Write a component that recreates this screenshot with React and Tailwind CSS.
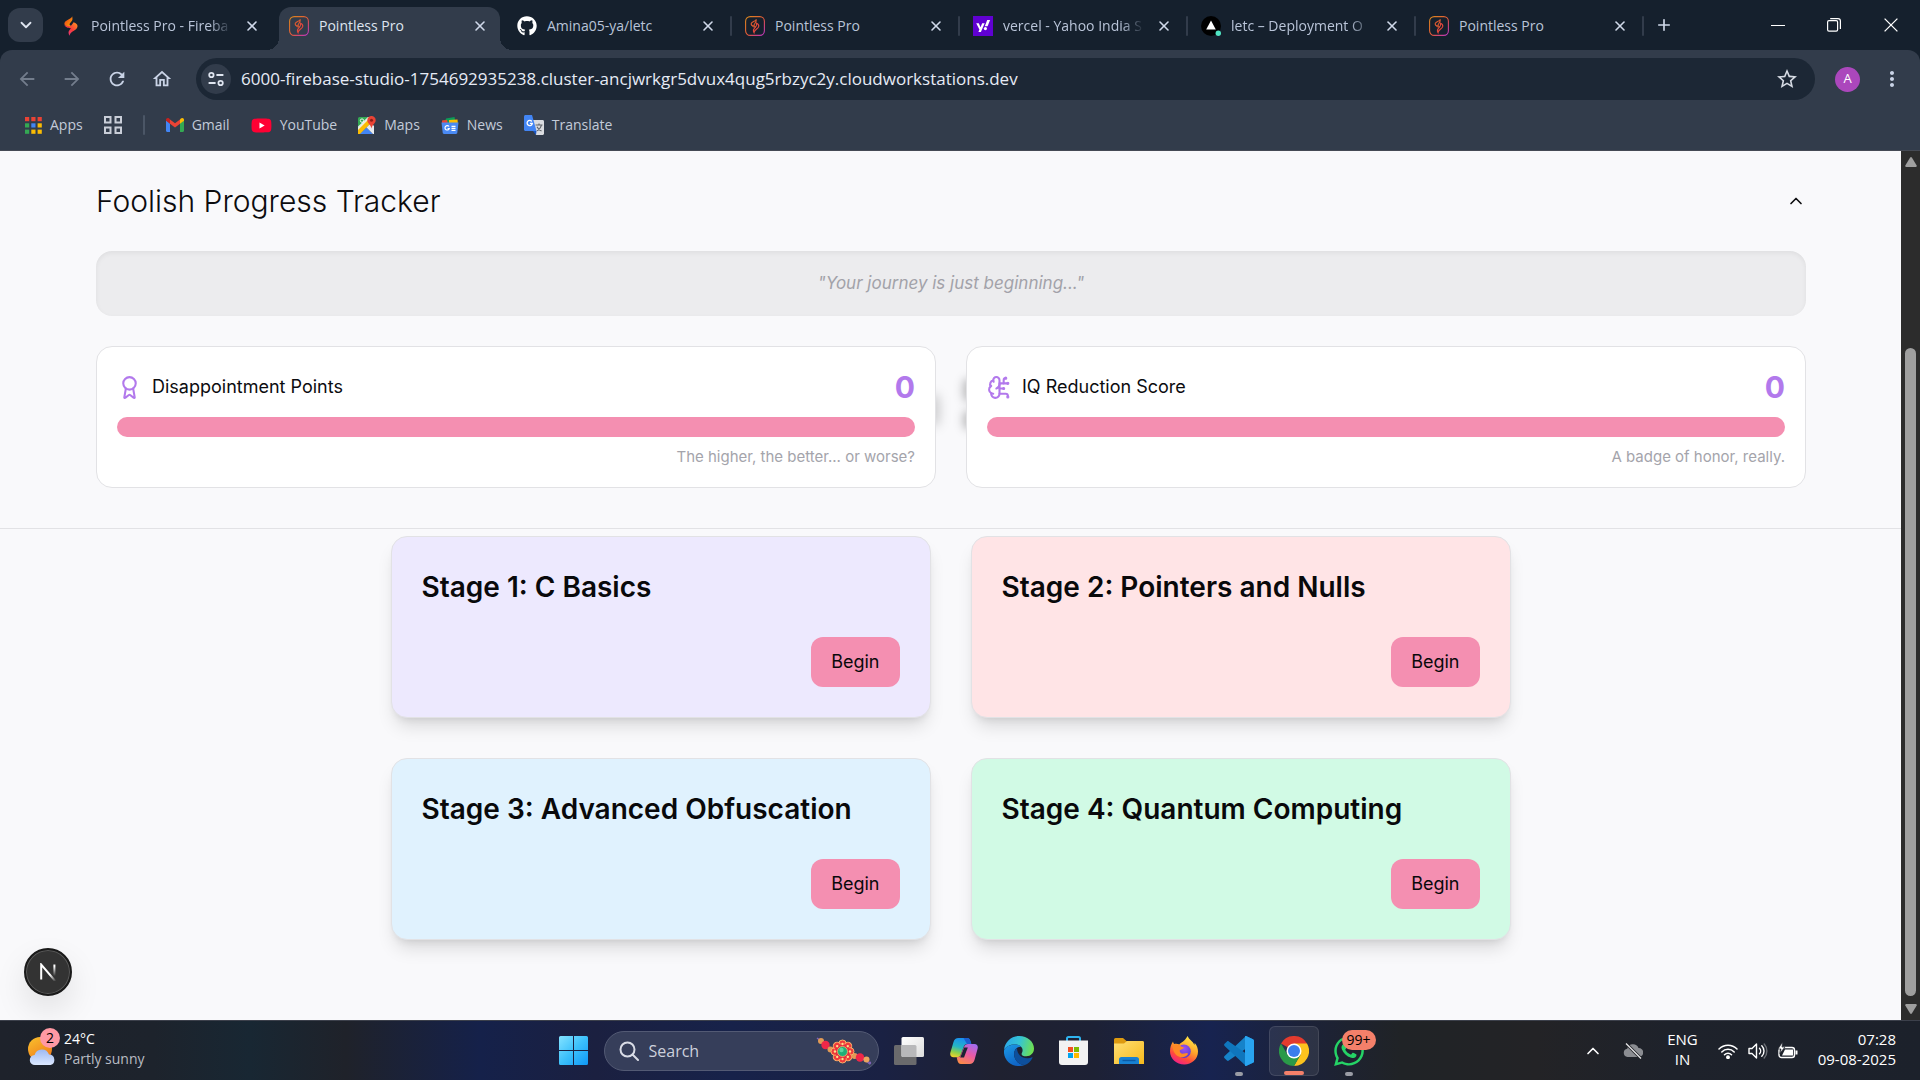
import React from "react";
import { Award, BrainCircuit, ChevronUp, ChevronDown, X, Plus } from "lucide-react";
import { FaGithub, FaWhatsapp, FaYoutube } from "react-icons/fa";
import { MdArrowBack, MdArrowForward, MdRefresh, MdOutlineHome, MdStarOutline, MdMoreVert } from "react-icons/md";

/* ---------- favicons ---------- */

function FirebaseStudioIcon() {
  return (
    <svg viewBox="0 0 20 20" className="size-5 shrink-0">
      <defs>
        <linearGradient id="fs-a" x1="0" y1="0" x2="1" y2="1">
          <stop offset="0" stopColor="#e8321f" />
          <stop offset="1" stopColor="#ffb300" />
        </linearGradient>
        <linearGradient id="fs-b" x1="1" y1="0" x2="0" y2="1">
          <stop offset="0" stopColor="#ff9a1f" />
          <stop offset="0.5" stopColor="#f83b3b" />
          <stop offset="1" stopColor="#e0349a" />
        </linearGradient>
      </defs>
      <path d="M11.2 0.3C11.6 3 11.8 4.2 10.2 5.8L8.8 7.4C8.2 8.3 8.6 9.2 10 9.8L8.6 11.4C6.2 10.5 3.2 9.4 3.4 7.5C3.6 5.5 5 5 7.4 3.6C9.4 2.6 10.8 1.8 11.2 0.3Z" fill="url(#fs-a)" />
      <path d="M3.4 8.6C6 11 10 10.6 11 8.4L12.6 6.2C15 7.2 16.8 8.2 16.5 10.6C16.2 13 14.4 14 12 15.2C9.8 16.4 9 17.6 8.6 19.7C7.4 17.4 7 15.8 8.4 14.2L10 12.2C7.6 12.4 4 11.4 3.4 8.6Z" fill="url(#fs-b)" />
    </svg>
  );
}

function PointlessIcon() {
  return (
    <svg viewBox="0 0 20 20" className="size-5 shrink-0" fill="none">
      <defs>
        <linearGradient id="pp-a" x1="0" y1="0" x2="1" y2="1">
          <stop offset="0" stopColor="#d98a1c" />
          <stop offset="0.55" stopColor="#e2553a" />
          <stop offset="1" stopColor="#b834c8" />
        </linearGradient>
      </defs>
      <rect x="0.6" y="0.6" width="18.8" height="18.8" rx="4.6" stroke="url(#pp-a)" strokeWidth="1.1" />
      <path d="M11.3 3.3C11.4 5.2 11.3 6.2 9.8 7.6C8.9 8.5 8.7 9.3 9.4 10.3C7.3 9.8 5.9 8.9 6.2 7.6C6.6 5.7 10.6 5.5 11.3 3.3Z" stroke="#dc5a30" strokeWidth="1.1" />
      <path d="M11.6 7.2C13.4 8 14.2 8.8 13.7 10.6C13.1 12.8 9.4 13.6 9 16.6C7.9 14.7 8.1 13.6 9.6 12.2C11 11 12 9.4 11.6 7.2Z" stroke="#e2483c" strokeWidth="1.1" />
      <path d="M6.6 9.4C7.6 10.8 9.4 11.4 11 10.8" stroke="#dc5a30" strokeWidth="1" />
    </svg>
  );
}

function YahooIcon() {
  return (
    <svg viewBox="0 0 20 20" className="size-5 shrink-0">
      <rect width="20" height="20" fill="#6001d2" />
      <path d="M3.2 7.2h2.6l1.7 4.1 1.7-4.1h2.5L7.9 16H5.4l1-2.4z" fill="#fff" />
      <path d="M14.2 4h2.9l-2.5 6.2h-2.8z" fill="#fff" />
      <circle cx="12.4" cy="12.6" r="1.6" fill="#fff" />
    </svg>
  );
}

function VercelIcon() {
  return (
    <svg viewBox="0 0 20 20" className="size-5 shrink-0">
      <circle cx="10" cy="10" r="10" fill="#000" />
      <path d="M10 4.6l4.8 9H5.2z" fill="#fff" />
      <circle cx="17.3" cy="17.3" r="2.7" fill="#50e3c2" />
    </svg>
  );
}

/* ---------- browser ---------- */

const tabs = [
  { title: "Pointless Pro - Fireba", icon: <FirebaseStudioIcon />, fade: true },
  { title: "Pointless Pro", icon: <PointlessIcon />, active: true },
  { title: "Amina05-ya/letc", icon: <FaGithub className="size-5 shrink-0 text-white" />, line: true },
  { title: "Pointless Pro", icon: <PointlessIcon />, line: true },
  { title: "vercel - Yahoo India S", icon: <YahooIcon />, line: true, fade: true },
  { title: "letc – Deployment O", icon: <VercelIcon />, line: true, fade: true },
  { title: "Pointless Pro", icon: <PointlessIcon />, line: true },
];

function Tab({ tab }) {
  return (
    <div className="flex w-[228px] min-w-0 items-center">
      <div
        className={
          tab.active
            ? "relative flex h-[43px] min-w-0 flex-1 items-center rounded-t-xl bg-[#323c4b] pr-3 pb-1.5 pl-2.5 text-[#dfe5f0]"
            : "relative flex h-[43px] min-w-0 flex-1 items-center pr-3 pb-1.5 pl-2.5 text-[#b9c4d8]"
        }
      >
        {tab.active && (
          <>
            <span className="absolute bottom-0 -left-3 size-3 bg-[radial-gradient(circle_at_0_0,transparent_12px,#323c4b_12px)]" />
            <span className="absolute -right-3 bottom-0 size-3 bg-[radial-gradient(circle_at_100%_0,transparent_12px,#323c4b_12px)]" />
          </>
        )}
        {tab.icon}
        <span
          className={
            tab.fade
              ? "ml-2.5 min-w-0 flex-1 [mask-image:linear-gradient(to_right,black_84%,transparent)] text-sm whitespace-nowrap"
              : "ml-2.5 min-w-0 flex-1 text-sm whitespace-nowrap"
          }
        >
          {tab.title}
        </span>
        <button aria-label={"Close " + tab.title} className="ml-3 text-[#d0d9ea]">
          <X className="size-4" strokeWidth={2.4} />
        </button>
      </div>
      <span className={tab.line ? "mr-0.5 mb-1.5 ml-0.5 h-5 w-0.5 shrink-0 rounded bg-[#323c4b]" : "mr-0.5 ml-0.5 h-5 w-0.5 shrink-0"} />
      <span className="w-px shrink-0" />
    </div>
  );
}

function TabStrip() {
  return (
    <div className="flex h-[50px] items-end bg-[#15202d]">
      <button aria-label="Search tabs" className="mb-2 ml-2 flex h-[34px] w-[35px] shrink-0 items-center justify-center rounded-xl bg-[#323c4b] text-[#dfe5f0]">
        <ChevronDown className="size-[18px]" strokeWidth={2.4} />
      </button>
      <div className="ml-2 flex min-w-0">
        {tabs.map((t, i) => (
          <Tab key={i} tab={t} />
        ))}
      </div>
      <button aria-label="New tab" className="mb-4 ml-2 text-[#d0d9ea]">
        <Plus className="size-[18px]" strokeWidth={2.2} />
      </button>
      <div className="ml-auto flex h-[50px] shrink-0 text-white">
        <button aria-label="Minimize" className="flex w-14 items-center justify-center">
          <span className="h-px w-3.5 bg-white" />
        </button>
        <button aria-label="Restore" className="flex w-14 items-center justify-center">
          <svg viewBox="0 0 14 14" className="size-3.5" fill="none" stroke="currentColor" strokeWidth="1.2">
            <rect x="0.6" y="2.6" width="10" height="10.6" rx="1.4" />
            <path d="M3.2 0.6H11a2.4 2.4 0 0 1 2.4 2.4v8" />
          </svg>
        </button>
        <button aria-label="Close window" className="flex w-[58px] items-center justify-center">
          <svg viewBox="0 0 14 14" className="size-3.5" fill="none" stroke="currentColor" strokeWidth="1.3">
            <path d="M0.6 0.6L13.4 13.4M13.4 0.6L0.6 13.4" />
          </svg>
        </button>
      </div>
    </div>
  );
}

function NavButton({ label, dim, children }) {
  return (
    <button
      aria-label={label}
      className={
        dim
          ? "flex h-9 w-[45px] shrink-0 items-center justify-center text-[#737d8c]"
          : "flex h-9 w-[45px] shrink-0 items-center justify-center text-[#c9d3e6]"
      }
    >
      {children}
    </button>
  );
}

function Toolbar() {
  return (
    <div className="flex h-[50px] items-end bg-[#323c4b] pl-1">
      <div className="flex h-[42px] items-center">
        <NavButton label="Back" dim><MdArrowBack className="size-[22px]" /></NavButton>
        <NavButton label="Forward" dim><MdArrowForward className="size-[22px]" /></NavButton>
        <NavButton label="Reload"><MdRefresh className="size-[22px]" /></NavButton>
        <NavButton label="Home"><MdOutlineHome className="size-[22px]" /></NavButton>
      </div>
      <div className="ml-3 flex h-[42px] min-w-0 flex-1 items-center rounded-full bg-[#1c2735] pr-4 pl-[5px]">
        <button aria-label="Site information" className="flex size-[30px] shrink-0 items-center justify-center rounded-full bg-[#323c4b] text-[#dfe5f0]">
          <svg viewBox="0 0 18 18" className="size-[18px]" fill="none" stroke="currentColor" strokeWidth="1.8">
            <circle cx="4.4" cy="5" r="2.2" />
            <path d="M9.4 5H16.4M1.6 13H8.6" />
            <circle cx="13.6" cy="13" r="2.2" />
          </svg>
        </button>
        <input
          aria-label="Address"
          className="ml-2.5 min-w-0 flex-1 bg-transparent text-[17px] text-[#e6ebf5] outline-none"
          defaultValue="6000-firebase-studio-1754692935238.cluster-ancjwrkgr5dvux4qug5rbzyc2y.cloudworkstations.dev"
        />
        <button aria-label="Bookmark this page" className="text-[#d5dae3]">
          <MdStarOutline className="size-6" />
        </button>
      </div>
      <div className="flex h-[42px] shrink-0 items-center">
        <button aria-label="Profile" className="ml-5 flex size-[25px] items-center justify-center rounded-full bg-[#ab47bc] text-[13px] text-white">
          A
        </button>
        <button aria-label="Menu" className="mr-4 ml-5 text-[#c9d3e6]">
          <MdMoreVert className="size-6" />
        </button>
      </div>
    </div>
  );
}

const appColors = ["#ea4335", "#ea4335", "#ea4335", "#34a853", "#4285f4", "#fbbc04", "#34a853", "#fbbc04", "#fbbc04"];

function AppsIcon() {
  return (
    <svg viewBox="0 0 17 17" className="size-[17px]">
      {appColors.map((c, i) => (
        <rect key={i} x={(i % 3) * 6.3} y={Math.floor(i / 3) * 6.3} width="4.2" height="4.2" fill={c} />
      ))}
    </svg>
  );
}

function GmailIcon() {
  return (
    <svg viewBox="0 0 18 14" className="h-3.5 w-[18px]">
      <path d="M0 2v10.8c0 .7.5 1.2 1.2 1.2H4V5.6z" fill="#4285f4" />
      <path d="M18 2v10.8c0 .7-.5 1.2-1.2 1.2H14V5.6z" fill="#34a853" />
      <path d="M14 1.4v4.4l4-3V1.9C18 .2 16.2-.6 14.9.5z" fill="#fbbc04" />
      <path d="M4 5.8V1.4l5 3.8 5-3.8v4.4l-5 3.8z" fill="#ea4335" />
      <path d="M0 1.9v.9l4 3V1.4L3.1.5C1.800-.5 0 .2 0 1.900z" fill="#c5221f" />
    </svg>
  );
}

function MapsIcon() {
  return (
    <svg viewBox="0 0 18 18" className="size-[18px]">
      <path d="M0 2.500A1.500 1.500 0 0 1 1.500 1H11L0 13z" fill="#34a853" />
      <path d="M0 18V12.500L11 1h4v4L2.500 18z" fill="#fbbc04" />
      <path d="M0 10.500L10 1h3L0 14z" fill="#f1f3f4" opacity=".9" />
      <path d="M2 18l6.500-6.500L15 18z" fill="#4285f4" />
      <path d="M8.500 11.500L13 7l3 3v8h-1z" fill="#e8eaed" />
      <circle cx="4" cy="4.600" r="1.700" fill="none" stroke="#fff" strokeWidth=".9" />
      <path d="M13.500 0a4.200 4.200 0 0 1 4.200 4.200c0 3-3.200 4-4.200 8.200-1-4.200-4.200-5.200-4.200-8.200A4.200 4.200 0 0 1 13.500 0z" fill="#ea4335" />
      <circle cx="13.500" cy="4.200" r="1.500" fill="#8c1d18" />
    </svg>
  );
}

function NewsIcon() {
  return (
    <svg viewBox="0 0 18 17" className="h-[17px] w-[18px]">
      <path d="M1.500 3.500L12 1l1 5H2z" fill="#34a853" />
      <path d="M5 1.500L13.500 0l1 6H5z" fill="#0c9d58" />
      <path d="M8 3l8.500-.5L17 8H8z" fill="#fbbc04" />
      <path d="M1 3.500l5-.5 1 4H1z" fill="#ea4335" />
      <path d="M.5 5.500h17l-1.200 10.300c-.1.700-.5 1.200-1.300 1.200H3c-.8 0-1.200-.5-1.300-1.200z" fill="#4a8af4" />
      <path d="M8 9.500A2.200 2.200 0 1 0 8.300 11.500H6.600M10.500 9.300h4M10.500 11.300h4M10.500 13.300h4" stroke="#fff" strokeWidth="1.200" fill="none" />
    </svg>
  );
}

function TranslateIcon() {
  return (
    <svg viewBox="0 0 20 20" className="size-5">
      <path d="M8 5h10.500c.8 0 1.500.6 1.500 1.400V18.500c0 .8-.7 1.500-1.500 1.500H12z" fill="#dadce0" />
      <path d="M11.500 10h7M15 8.500V10M17.500 10c-.6 2.700-2.500 4.600-4.600 5.900M13 11.800c.9 2 2.400 3.300 4.500 4.200" stroke="#5f6368" strokeWidth="1.100" fill="none" />
      <path d="M1.500 0H8l4.500 16H1.500C.7 16 0 15.300 0 14.500v-13C0 .7.7 0 1.500 0z" fill="#4285f4" />
      <path d="M7.800 6.500A2.600 2.600 0 1 0 8.300 8.400H5.900" stroke="#fff" strokeWidth="1.300" fill="none" />
      <path d="M9 16h3.500L12 20z" fill="#1a55c4" />
    </svg>
  );
}

function Bookmark({ icon, label }) {
  return (
    <a href="#" className="flex items-center gap-2">
      {icon}
      <span>{label}</span>
    </a>
  );
}

function Bookmarks() {
  return (
    <nav className="flex h-[51px] items-center gap-[21px] border-b border-[#454a54] bg-[#323c4b] pl-[25px] text-sm text-[#c3cbd9]">
      <Bookmark icon={<AppsIcon />} label="Apps" />
      <button aria-label="Tab groups" className="text-[#c9ced8]">
        <svg viewBox="0 0 18 18" className="size-[18px]" fill="none" stroke="currentColor" strokeWidth="2">
          <rect x="1" y="1" width="5.500" height="5.500" />
          <rect x="11.500" y="1" width="5.500" height="5.500" />
          <rect x="1" y="11.500" width="5.500" height="5.500" />
          <rect x="11.500" y="11.500" width="5.500" height="5.500" />
        </svg>
      </button>
      <span className="h-5 w-0.5 rounded bg-[#4b5666]" />
      <Bookmark icon={<GmailIcon />} label="Gmail" />
      <Bookmark
        icon={
          <span className="relative flex">
            <span className="absolute inset-1 bg-white" />
            <FaYoutube className="relative size-[21px] text-[#ff0033]" />
          </span>
        }
        label="YouTube"
      />
      <Bookmark icon={<MapsIcon />} label="Maps" />
      <Bookmark icon={<NewsIcon />} label="News" />
      <Bookmark icon={<TranslateIcon />} label="Translate" />
    </nav>
  );
}

/* ---------- page ---------- */

function ScoreCard({ icon, title, note }) {
  return (
    <div className="relative rounded-2xl border border-[#e2e2e5] bg-white p-5">
      <div className="flex h-10 items-center gap-2.5 text-[#b279ec]">
        {icon}
        <h3 className="text-lg text-[#0c0c0f]">{title}</h3>
        <span className="ml-auto text-[30px] leading-10 font-bold">0</span>
      </div>
      <div role="progressbar" aria-label={title} aria-valuenow={0} className="mt-2.5 h-5 rounded-full bg-[#f48fb1]" />
      <p className="mt-2.5 text-right text-[15px] leading-5 text-[#a4a4ab]">{note}</p>
    </div>
  );
}

function Tracker() {
  return (
    <section className="border-b border-[#e2e2e5] pt-[30px] pr-[95px] pb-10 pl-24">
      <div className="flex h-10 items-center justify-between">
        <h1 className="text-[30px] font-light text-[#0c0c0f]">Foolish Progress Tracker</h1>
        <button aria-label="Collapse tracker" className="text-[#0c0c0f]">
          <ChevronUp className="size-5" strokeWidth={2} />
        </button>
      </div>
      <div className="mt-[30px] flex h-[65px] items-center justify-center rounded-2xl bg-[#ececee] text-[17px] text-[#a2a2a9] italic shadow-[inset_0_2px_5px_rgba(0,0,0,0.06)]">
        "Your journey is just beginning..."
      </div>
      <div className="relative mt-[30px] grid grid-cols-2 gap-[30px]">
        <div className="absolute inset-y-0 left-1/2 -ml-6 w-12">
          <span className="absolute top-12 left-0 h-8 w-3 rounded-full bg-black/20 blur-[6px]" />
          <span className="absolute top-8 right-0 h-6 w-3 rounded-full bg-black/25 blur-[5px]" />
          <span className="absolute top-16 right-0 h-5 w-3 rounded-full bg-black/25 blur-[5px]" />
        </div>
        <ScoreCard icon={<Award className="size-[25px]" />} title="Disappointment Points" note="The higher, the better... or worse?" />
        <ScoreCard
          icon={<BrainCircuit className="size-[25px]" />}
          title="IQ Reduction Score"
          note="A badge of honor, really."
        />
      </div>
    </section>
  );
}

const stages = [
  { title: "Stage 1: C Basics", bg: "bg-[#ede9fe]" },
  { title: "Stage 2: Pointers and Nulls", bg: "bg-[#ffe4e6]" },
  { title: "Stage 3: Advanced Obfuscation", bg: "bg-[#e0f2fe]" },
  { title: "Stage 4: Quantum Computing", bg: "bg-[#d1fae5]" },
];

function StageCard({ stage }) {
  return (
    <article className={"rounded-2xl border border-[#e2e2e5] p-[30px] shadow-[0_12px_18px_-4px_rgba(0,0,0,0.13),0_5px_8px_-5px_rgba(0,0,0,0.12)] " + stage.bg}>
      <h2 className="text-[28px] leading-10 font-semibold text-[#09090b]">{stage.title}</h2>
      <div className="mt-[30px] flex justify-end">
        <button className="h-[50px] rounded-xl bg-[#f48fb1] px-5 text-lg text-[#09090b]">Begin</button>
      </div>
    </article>
  );
}

function Page() {
  return (
    <div className="flex min-h-0 flex-1">
      <main className="relative min-w-0 flex-1 overflow-hidden bg-[#f9f9fb] font-['Inter',sans-serif]">
        <Tracker />
        <div className="mx-auto mt-[7px] grid max-w-[1120px] grid-cols-2 gap-10">
          {stages.map((s) => (
            <StageCard key={s.title} stage={s} />
          ))}
        </div>
        <button aria-label="Next.js Dev Tools" className="absolute bottom-6 left-6 flex size-12 items-center justify-center rounded-full border-2 border-[#1a1a1a] bg-[#333] shadow-[inset_0_0_0_1px_#5a5a5a,0_14px_32px_rgba(0,0,0,0.10)]">
          <svg viewBox="0 0 18 18" className="size-[18px]" fill="none">
            <defs>
              <linearGradient id="n-a" x1="0" y1="0" x2="1" y2="1">
                <stop offset="0.6" stopColor="#fff" />
                <stop offset="1" stopColor="#fff" stopOpacity="0" />
              </linearGradient>
              <linearGradient id="n-b" gradientUnits="userSpaceOnUse" x1="0" y1="1" x2="0" y2="13">
                <stop offset="0.2" stopColor="#fff" />
                <stop offset="1" stopColor="#fff" stopOpacity="0" />
              </linearGradient>
            </defs>
            <path d="M2.200 16.500V1.600L16.600 18.500" stroke="url(#n-a)" strokeWidth="2" />
            <path d="M15.400 1.500V13" stroke="url(#n-b)" strokeWidth="2" />
          </svg>
        </button>
      </main>
      <div aria-hidden="true" className="flex w-[19px] shrink-0 flex-col items-center bg-[#2c2c2c] py-1.5">
        <svg viewBox="0 0 12 10" className="h-2.5 w-3">
          <path d="M5 .8a1.200 1.200 0 0 1 2 0L11.700 8.500Q12 10 10.800 10H1.200Q0 10 .3 8.500z" fill="#9f9f9f" />
        </svg>
        <div className="flex w-[11px] flex-1 flex-col py-1">
          <div className="basis-[21.5%]" />
          <div className="flex-1 rounded-full bg-[#9f9f9f]" />
        </div>
        <svg viewBox="0 0 12 10" className="mt-1 h-2.5 w-3">
          <path d="M5 9.200a1.200 1.200 0 0 0 2 0L11.700 1.500Q12 0 10.800 0H1.200Q0 0 .3 1.500z" fill="#9f9f9f" />
        </svg>
      </div>
    </div>
  );
}

/* ---------- taskbar icons ---------- */

function WeatherIcon() {
  return (
    <svg viewBox="0 0 28 30" className="h-[30px] w-7">
      <defs>
        <linearGradient id="w-a" x1="0" y1="0" x2="0.6" y2="1">
          <stop offset="0" stopColor="#f9c22e" />
          <stop offset="1" stopColor="#f07d1a" />
        </linearGradient>
        <linearGradient id="w-b" x1="0" y1="0" x2="0" y2="1">
          <stop offset="0" stopColor="#9db9f2" />
          <stop offset="1" stopColor="#dbe8ff" />
        </linearGradient>
      </defs>
      <circle cx="12" cy="13" r="12" fill="url(#w-a)" />
      <path d="M7 29a5 5 0 0 1-.4-10A7.500 7.500 0 0 1 21 18.600 5.300 5.300 0 0 1 22.500 29z" fill="url(#w-b)" />
    </svg>
  );
}

function StartIcon() {
  return (
    <svg viewBox="0 0 29 29" className="size-[29px]">
      <defs>
        <linearGradient id="st" gradientUnits="userSpaceOnUse" x1="0" y1="0" x2="29" y2="29">
          <stop offset="0" stopColor="#84e3ff" />
          <stop offset="0.5" stopColor="#3cc0fb" />
          <stop offset="1" stopColor="#0f97f5" />
        </linearGradient>
      </defs>
      <path d="M0 1.500A1.500 1.500 0 0 1 1.500 0H14V14H0zM15 0h12.500A1.500 1.500 0 0 1 29 1.500V14H15zM0 15H14V29H1.500A1.500 1.500 0 0 1 0 27.500zM15 15H29v12.500a1.500 1.500 0 0 1-1.500 1.500H15z" fill="url(#st)" />
    </svg>
  );
}

const petals = [0, 45, 90, 135, 180, 225, 270, 315];

function RakhiIcon() {
  return (
    <svg viewBox="0 0 56 30" className="h-[30px] w-14 shrink-0">
      <path d="M1 2L17 14M40 18L54 28" stroke="#7f63b8" strokeWidth="1.500" />
      <circle cx="5" cy="5" r="3" fill="#e29a55" />
      <circle cx="9.500" cy="9" r="4.200" fill="#ef2748" />
      <circle cx="14.500" cy="13.500" r="3" fill="#e29a55" />
      <circle cx="38.500" cy="20" r="3" fill="#e29a55" />
      <circle cx="44" cy="21.500" r="4.200" fill="#ef2748" />
      <circle cx="50.500" cy="23.500" r="3" fill="#eba55e" />
      <circle cx="53.800" cy="27" r="1.400" fill="#7f63b8" />
      {petals.map((a) => (
        <g key={a} transform={"rotate(" + a + " 26.500 15.500)"}>
          <circle cx="26.500" cy="7.800" r="3.800" fill="#ef3b3b" stroke="#f7b06a" strokeWidth="1" />
        </g>
      ))}
      <circle cx="26.500" cy="15.500" r="7.600" fill="#e62e3f" />
      {petals.map((a) => (
        <circle key={a} cx="26.500" cy="8" r="1.200" fill="#ffe08a" transform={"rotate(" + a + " 26.500 15.500)"} />
      ))}
      <circle cx="26.500" cy="15.500" r="5" fill="#1fb078" stroke="#f7b06a" strokeWidth="0.800" />
      <circle cx="25.500" cy="14" r="2.200" fill="#59d6a0" />
    </svg>
  );
}

function TaskViewIcon() {
  return (
    <svg viewBox="0 0 30 28" className="h-7 w-[30px]">
      <defs>
        <linearGradient id="tv" x1="0" y1="0" x2="1" y2="1">
          <stop offset="0" stopColor="#fff" />
          <stop offset="1" stopColor="#dcdcdc" />
        </linearGradient>
      </defs>
      <rect x="0" y="8" width="22.500" height="20" rx="1.500" fill="#6a6a6c" />
      <rect x="7.500" y="0" width="22.500" height="20" rx="1.500" fill="url(#tv)" />
      <path d="M7.500 8h13.500a1.500 1.500 0 0 1 1.500 1.500V20H9A1.500 1.500 0 0 1 7.500 18.500z" fill="#b8b8ba" />
    </svg>
  );
}

function CopilotIcon() {
  return (
    <svg viewBox="0 0 28 26" className="h-[26px] w-7">
      <defs>
        <linearGradient id="cp-a" x1="0.500" y1="0" x2="0.200" y2="1">
          <stop offset="0" stopColor="#1a8ff0" />
          <stop offset="0.450" stopColor="#25b6c4" />
          <stop offset="0.750" stopColor="#8fd04a" />
          <stop offset="1" stopColor="#f3d12c" />
        </linearGradient>
        <linearGradient id="cp-b" x1="0.800" y1="0" x2="0.300" y2="1">
          <stop offset="0" stopColor="#a06cf0" />
          <stop offset="0.500" stopColor="#ea5aa5" />
          <stop offset="1" stopColor="#fb8a4a" />
        </linearGradient>
      </defs>
      <path d="M8.500 0H17c2.200 0 3 1.500 3.700 4l.6 2H17c-1.700 0-2.600.9-3.200 2.600L11 16c-.8 2.400-1.900 3.300-4 3.300H3.500C.7 19.300-.3 17 .4 14.500L3.500 4C4.300 1.400 5.900 0 8.500 0z" fill="url(#cp-a)" />
      <path d="M13.500 0H17c2.200 0 3 1.500 3.700 4l.6 2H17z" fill="#1b5ed0" />
      <path d="M19.500 26H11c-2.200 0-3-1.500-3.700-4l-.6-2.700C9.500 19.300 10.400 18 11 16.300L14 9c.9-2.200 2-3 4-3h6.500c2.800 0 3.800 2.300 3.100 4.800L24.500 22c-.8 2.600-2.400 4-5 4z" fill="url(#cp-b)" />
      <path d="M14.200 9.500h3.600L14 19.500h-3.800z" fill="#1d2233" />
    </svg>
  );
}

function EdgeIcon() {
  return (
    <svg viewBox="0 0 30 30" className="size-[30px]">
      <defs>
        <linearGradient id="ed-a" x1="0" y1="0.300" x2="1" y2="0.500">
          <stop offset="0" stopColor="#2aa7ea" />
          <stop offset="0.500" stopColor="#35c4d4" />
          <stop offset="1" stopColor="#6fe04f" />
        </linearGradient>
        <linearGradient id="ed-b" x1="0" y1="0" x2="0.500" y2="1">
          <stop offset="0" stopColor="#1c9ae6" />
          <stop offset="1" stopColor="#0f63c4" />
        </linearGradient>
      </defs>
      <path d="M0 14C1 5.500 7.500 0 15.300 0 23.500 0 30 5.800 30 12.600c0 4.600-3.400 7.700-7.600 7.700-3.200 0-4.800-1.200-4.800-2.400 0-.9 1-1.500 1-3.600 0-3.400-3.400-5.800-7.600-5.800C6 8.500 2 10.500 0 14z" fill="url(#ed-a)" />
      <path d="M0 14.500C1.300 10.500 6 8.400 10.800 8.400c3 0 5.200 1 6.500 2.400-3.700-.6-7.200 2.500-7.200 7.200 0 5.800 4.500 11 10.800 11-1.900.7-3.800 1-5.900 1C6.500 30-.7 23.500 0 14.500z" fill="url(#ed-b)" />
      <path d="M10.100 18c0-2.700 1.100-4.800 2.900-6 0 6.200 4.700 10.300 10.100 10.300 2 0 3.500-.5 4.700-1.100.5-.2.900.2.600.7C26.600 25.500 24 28 20.900 29c-6.300 0-10.800-5.200-10.800-11z" fill="#0d4f9c" />
    </svg>
  );
}

function StoreIcon() {
  return (
    <svg viewBox="0 0 29 29" className="size-[29px]">
      <path d="M8 6V2.500A1.500 1.500 0 0 1 9.500 1h10A1.500 1.500 0 0 1 21 2.500V6" fill="none" stroke="#2fb4f0" strokeWidth="2" />
      <path d="M0 4.500h29V26a3 3 0 0 1-3 3H3a3 3 0 0 1-3-3z" fill="#f2f2f2" />
      <rect x="9" y="11" width="5" height="5" fill="#f25022" />
      <rect x="15" y="11" width="5" height="5" fill="#7fba00" />
      <rect x="9" y="17" width="5" height="5" fill="#00a4ef" />
      <rect x="15" y="17" width="5" height="5" fill="#ffb900" />
    </svg>
  );
}

function FolderIcon() {
  return (
    <svg viewBox="0 0 30 26" className="h-[26px] w-[30px]">
      <defs>
        <linearGradient id="fo" x1="0" y1="0" x2="1" y2="1">
          <stop offset="0" stopColor="#ffdf74" />
          <stop offset="1" stopColor="#f6b91c" />
        </linearGradient>
      </defs>
      <path d="M0 1.500A1.500 1.500 0 0 1 1.500 0H9l3.500 3H28a2 2 0 0 1 2 2v6H0z" fill="#dd9a10" />
      <path d="M0 5.500h10L13 3h15.500A1.500 1.500 0 0 1 30 4.500V26H0z" fill="url(#fo)" />
      <path d="M5 26v-4.500A2.500 2.500 0 0 1 7.500 19h15a2.500 2.500 0 0 1 2.500 2.500V26z" fill="#1881d2" />
      <path d="M8.500 22.500h13" stroke="#0b5aa5" strokeWidth="1.400" />
    </svg>
  );
}

function FirefoxIcon() {
  return (
    <svg viewBox="0 0 30 30" className="size-[30px]">
      <defs>
        <linearGradient id="ff-a" x1="0.800" y1="0" x2="0.300" y2="1">
          <stop offset="0" stopColor="#fff14a" />
          <stop offset="0.450" stopColor="#ffa32a" />
          <stop offset="0.750" stopColor="#ff4a3d" />
          <stop offset="1" stopColor="#f01d8c" />
        </linearGradient>
        <radialGradient id="ff-b" cx="0.500" cy="0.300" r="0.700">
          <stop offset="0" stopColor="#a052f0" />
          <stop offset="1" stopColor="#5a3bd0" />
        </radialGradient>
      </defs>
      <path d="M18.500 0C20 3.500 24 5.500 25.500 9c.2-.8.200-1.500 0-2.200C28 9.500 29 12.500 29 15.500 29 23 22.800 28.500 15.300 28.500 7.500 28.500 1 23 1 15.300 1 11.500 2 8.200 4 5.500c.2 1.100.6 1.900 1.200 2.600 2-.5 3.600-.2 5 .5C12 6 16 5.500 18.500 0z" fill="url(#ff-a)" />
      <circle cx="15" cy="15.200" r="6.800" fill="url(#ff-b)" />
      <path d="M3.500 9c3.500-1.500 6.500-1 8.500 1.500l3 1c-.5 1.800-3.500 1.700-4.300 3 0 2 1.500 3.700 4.500 3 1.500-.4 3-.8 4 .3-1.500 2.700-4.500 4-7.700 3.400C6.500 20 3.500 15 3.500 9z" fill="#ff8a26" />
    </svg>
  );
}

function CodeIcon() {
  return (
    <svg viewBox="0 0 30 30" className="size-[30px]">
      <path d="M22 0l7 3.200c.6.300 1 .9 1 1.600V7L4.800 24.600c-.6.400-1.300.400-1.800-.1L.6 22.300c-.7-.6-.7-1.600 0-2.200z" fill="#1683c9" />
      <path d="M22 30l7-3.200c.6-.3 1-.9 1-1.600V23L4.800 5.400c-.6-.4-1.300-.4-1.800.1L.6 7.700c-.7.600-.7 1.600 0 2.200z" fill="#0f76bd" />
      <path d="M22 0l7 3.200c.6.300 1 .9 1 1.600v20.400c0 .7-.4 1.300-1 1.600L22 30c-.7.200-1 0-1-1V1c0-1 .3-1.200 1-1z" fill="#29a4f0" />
    </svg>
  );
}

function ChromeIcon() {
  return (
    <svg viewBox="0 0 30 30" className="size-[30px]">
      <path d="M15 15L2 7.500A15 15 0 0 1 28 7.500z" fill="#e33b2e" />
      <path d="M28 7.500A15 15 0 0 1 15 30L21.500 18.750 15 7.500z" fill="#fcc31e" />
      <path d="M2 7.500A15 15 0 0 0 15 30L21.500 18.750 15 15 8.500 18.750z" fill="#2a9a48" />
      <circle cx="15" cy="15" r="7.500" fill="#fff" />
      <circle cx="15" cy="15" r="6" fill="#3b7ded" />
    </svg>
  );
}

function TaskButton({ label, mark, children }) {
  return (
    <button
      aria-label={label}
      className={
        mark === "active"
          ? "relative flex size-[50px] shrink-0 items-center justify-center rounded-md border border-white/10 bg-white/8"
          : "relative flex size-[50px] shrink-0 items-center justify-center"
      }
    >
      {children}
      {mark === "active" && <span className="absolute bottom-0 h-1 w-5 rounded-full bg-[#f4806a]" />}
      {mark === "open" && <span className="absolute bottom-0 h-1 w-2 rounded-full bg-[#9a9ca5]" />}
    </button>
  );
}

function Taskbar() {
  return (
    <footer className="grid h-[60px] shrink-0 grid-cols-[1fr_auto_1fr] items-center border-t border-[#3c404b] bg-[linear-gradient(90deg,#1e222b_0%,#1d232c_8%,#182733_13%,#1f222a_18%,#15214a_25%,#1b2040_31%,#17224a_38%,#1a2143_46%,#1f2130_52%,#1d2135_57%,#172350_63%,#1c2238_68%,#202326_73%,#232326_80%,#1e222b_87%,#1c212b_100%)] text-[15px] text-white">
      <button className="flex items-center gap-2 pl-7 text-left">
        <span className="relative flex">
          <WeatherIcon />
          <span className="absolute -top-2 -right-1 flex size-5 items-center justify-center rounded-full bg-[#ff99a4] text-sm text-black">2</span>
        </span>
        <span className="flex flex-col pb-1 text-sm leading-5">
          <span>24°C</span>
          <span className="text-[#b9bcc3]">Partly sunny</span>
        </span>
      </button>
      <div className="flex items-center gap-[5px] pl-0.5">
        <TaskButton label="Start"><StartIcon /></TaskButton>
        <label className="flex h-10 w-[275px] items-center rounded-full border border-[#535a74] bg-[#363e5a] pr-1.5 pl-3.5">
          <svg viewBox="0 0 20 20" className="size-5 shrink-0" fill="none" stroke="#d9dce6" strokeWidth="2">
            <circle cx="8.500" cy="8.500" r="7" />
            <path d="M13.500 13.500L19 19" strokeLinecap="round" />
          </svg>
          <input type="text" aria-label="Search" placeholder="Search" className="ml-2.5 min-w-0 flex-1 bg-transparent text-base outline-none placeholder:text-[#cdd0dc]" />
          <RakhiIcon />
        </label>
        <TaskButton label="Task view"><TaskViewIcon /></TaskButton>
        <TaskButton label="Copilot"><CopilotIcon /></TaskButton>
        <TaskButton label="Edge"><EdgeIcon /></TaskButton>
        <TaskButton label="Microsoft Store"><StoreIcon /></TaskButton>
        <TaskButton label="File Explorer"><FolderIcon /></TaskButton>
        <TaskButton label="Firefox"><FirefoxIcon /></TaskButton>
        <TaskButton label="Visual Studio Code" mark="open"><CodeIcon /></TaskButton>
        <TaskButton label="Chrome" mark="active"><ChromeIcon /></TaskButton>
        <TaskButton label="WhatsApp" mark="open">
          <FaWhatsapp className="size-[34px] text-[#25d366]" />
          <span className="absolute top-1 left-[18px] flex h-5 items-center rounded-full bg-[#f4806a] px-[5px] text-sm text-black">99+</span>
        </TaskButton>
      </div>
      <div className="flex items-center justify-end pr-6">
        <button aria-label="Hidden icons"><ChevronUp className="size-5" strokeWidth={2} /></button>
        <svg viewBox="0 0 20 16" className="ml-5 h-4 w-5" fill="none">
          <path d="M4.500 14a4.200 4.200 0 0 1-.3-8.300A6 6 0 0 1 15.500 5 4.500 4.500 0 0 1 16 14z" fill="#8b8d92" />
          <path d="M3 0.500L18 15.500" stroke="#24262b" strokeWidth="3" />
          <path d="M3 0.500L18 15.500" stroke="#e8e8ea" strokeWidth="1.300" />
        </svg>
        <button className="ml-6 pb-1 text-center leading-5">ENG<br />IN</button>
        <button aria-label="Network, volume, battery" className="ml-5 flex items-center gap-2.5">
          <svg viewBox="0 0 20 16" className="h-4 w-5" fill="none" stroke="#fff" strokeWidth="1.500" strokeLinecap="round">
            <path d="M1 6a12.500 12.500 0 0 1 18 0M3.800 9a8.600 8.600 0 0 1 12.400 0M6.500 11.800a5 5 0 0 1 7 0" />
            <circle cx="10" cy="14.200" r="1.200" fill="#fff" />
          </svg>
          <svg viewBox="0 0 20 18" className="h-[18px] w-5" fill="none" stroke="#fff" strokeWidth="1.400" strokeLinecap="round" strokeLinejoin="round">
            <path d="M1 6.500h3L8.500 2v14L4 11.500H1z" />
            <path d="M11.500 6.200a4 4 0 0 1 0 5.600M13.800 3.700a7.500 7.500 0 0 1 0 10.600" />
            <path d="M16.200 2a10.500 10.500 0 0 1 0 14" opacity=".35" />
          </svg>
          <svg viewBox="0 0 20 18" className="h-[18px] w-5" fill="none">
            <rect x="1" y="5.500" width="15.500" height="10" rx="2.500" stroke="#fff" strokeWidth="1.400" />
            <path d="M7 7.500h8v6H4z" fill="#fff" />
            <path d="M18.500 8.500v4" stroke="#fff" strokeWidth="2" />
            <path d="M4.500 0L0 7h3L1.800 11.500 7 5H4z" fill="#fff" stroke="#1e222b" strokeWidth=".7" />
          </svg>
        </button>
        <button className="ml-5 pb-1 text-right leading-5">07:28<br />09-08-2025</button>
      </div>
    </footer>
  );
}

export default function App() {
  return (
    <div className="flex h-screen flex-col overflow-hidden font-['Open_Sans',sans-serif]">
      <header className="shrink-0 bg-[#15202d]">
        <TabStrip />
        <div className="overflow-hidden rounded-t-xl">
          <Toolbar />
          <Bookmarks />
        </div>
      </header>
      <Page />
      <Taskbar />
    </div>
  );
}
